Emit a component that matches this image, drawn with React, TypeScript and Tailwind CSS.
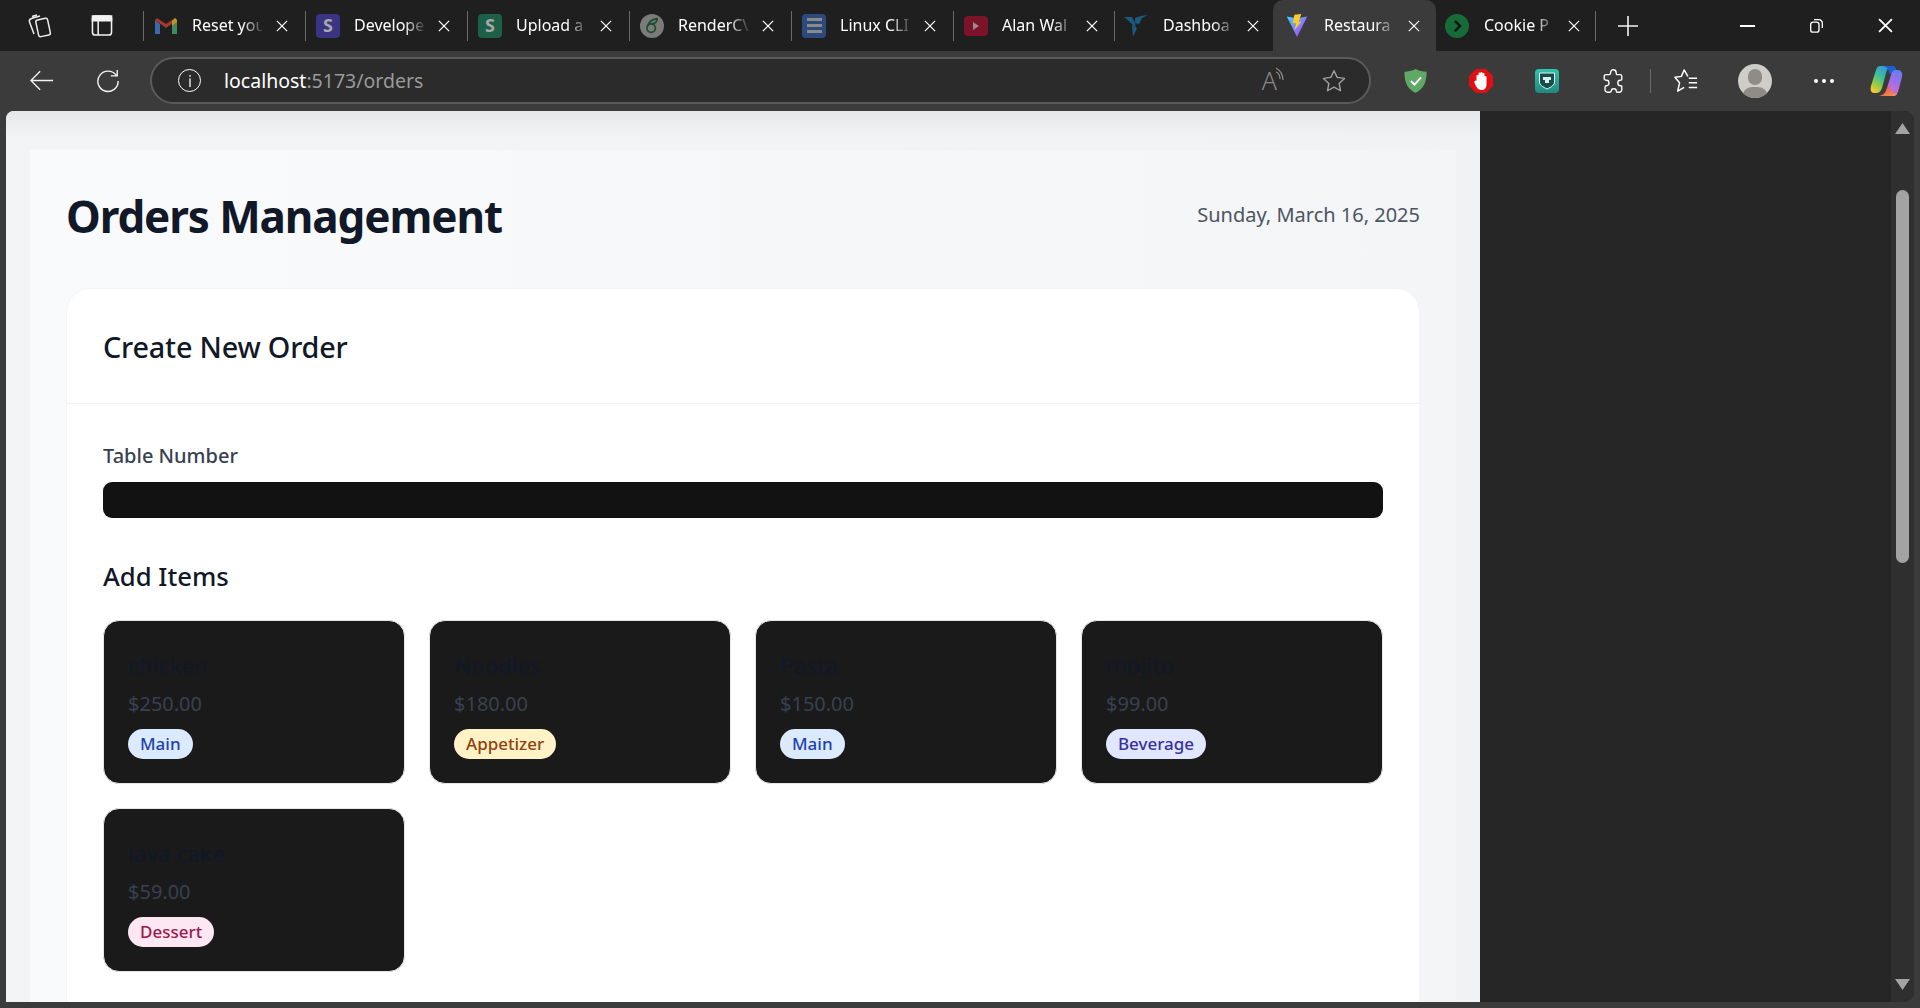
import React from "react";

const F = "font-['Noto_Sans','Open_Sans',sans-serif]";

function X({ s = 12, w = 1.5 }: { s?: number; w?: number }) {
  return (
    <svg width={s} height={s} viewBox="0 0 14 14" fill="none" stroke="#fff" strokeWidth={w}>
      <path d="M1 1 13 13M13 1 1 13" />
    </svg>
  );
}

const Gmail = () => (
  <svg width="22" height="16" viewBox="0 0 22 16">
    <path d="M0 2v14h5V6z" fill="#3a6aa8" />
    <path d="M22 2v14h-5V6z" fill="#3f8a5a" />
    <path d="M0 2 11 10 22 2l-2-2-9 6L2 0z" fill="#a8382f" />
    <path d="M17 3v5l5-4V2l-2-2z" fill="#b8962a" />
  </svg>
);
const Square = ({ bg, l }: { bg: string; l: string }) => (
  <div className={`w-6 h-6 rounded-[4px] flex items-center justify-center text-[18px] font-bold text-[#a8a8a8] ${bg}`}>{l}</div>
);
const Render = () => (
  <div className="w-6 h-6 rounded-full bg-[#7b7b7b] flex items-center justify-center">
    <svg width="14" height="17" viewBox="0 0 16 20" fill="none" stroke="#1d4d2d" strokeWidth="2">
      <circle cx="7" cy="13" r="5" />
      <path d="M3 11C4 5 8 3 14 2c0 4-3 6-7 6" />
    </svg>
  </div>
);
const Doc = () => (
  <div className="w-6 h-6 rounded-[4px] bg-[#2c4a7c] flex flex-col items-center justify-center gap-[3px]">
    <div className="w-[15px] h-[3px] bg-[#8a8a8a]" />
    <div className="w-[15px] h-[3px] bg-[#8a8a8a]" />
    <div className="w-[15px] h-[3px] bg-[#8a8a8a]" />
  </div>
);
const Yt = () => (
  <div className="w-6 h-5 rounded-[4px] bg-[#7c1328] flex items-center justify-center">
    <svg width="8" height="8" viewBox="0 0 8 8"><path d="M1 0 7 4 1 8z" fill="#9a8a8a" /></svg>
  </div>
);
const Bird = () => (
  <svg width="24" height="24" viewBox="0 0 24 24" fill="#1d5a80">
    <path d="M0 3 8 3 11 9 12 15 7 9z" />
    <path d="M11 4 17 2 24 1 18 4 15 10 11 9z" />
    <path d="M8 11 13 14 9 23z" />
  </svg>
);
const Vite = () => (
  <svg width="24" height="23" viewBox="0 0 24 27">
    <defs>
      <linearGradient id="vt" x1="0" y1="0" x2="1" y2="1">
        <stop offset="0" stopColor="#41d1ff" />
        <stop offset="1" stopColor="#bd34fe" />
      </linearGradient>
    </defs>
    <path d="M0 3 12 5 24 3 12 27z" fill="url(#vt)" />
    <path d="M9 1 17 0 14 9 17 9 9 19 11 11 7 11z" fill="#ffcc26" />
  </svg>
);
const Cookie = () => (
  <div className="w-6 h-6 rounded-full bg-[#176b38] flex items-center justify-center">
    <svg width="9" height="12" viewBox="0 0 10 14" fill="none" stroke="#0b1a10" strokeWidth="3"><path d="M2 1 8 7 2 13" /></svg>
  </div>
);

function Tab({ icon, title, box, gap }: { icon: React.ReactNode; title: string; box: string; gap: string }) {
  return (
    <div className={`relative flex items-center h-[51px] shrink-0 ${box}`}>
      <div className="w-6 flex items-center justify-center shrink-0">{icon}</div>
      <div className={`w-[70px] pb-[2px] overflow-hidden whitespace-nowrap text-[16px] text-white [mask-image:linear-gradient(to_right,#000_72%,rgba(0,0,0,0.12))] ${gap}`}>{title}</div>
      <div className="ml-[14px] shrink-0"><X /></div>
    </div>
  );
}
const Sep = () => <div className="w-px h-[30px] bg-[#6a6a6a] shrink-0 -mr-px" />;

const NORMAL = "w-[162px] pl-[11px]";

function TabBar() {
  return (
    <div className={`flex items-center h-[51px] bg-[#1f1f1f] ${F}`}>
      <div className="w-[78px] flex justify-center shrink-0">
        <svg width="25" height="24" viewBox="0 0 25 24" fill="none" stroke="#eee" strokeWidth="1.5">
          <rect x="10" y="5" width="12" height="17" rx="2" transform="rotate(-12 16 13)" />
          <path d="M7 20 2.500 8c-.5-1.500.5-3 2-3.500L13 2M5 2.500 10 1" />
        </svg>
      </div>
      <div className="w-[65px] flex justify-start pl-[13px] shrink-0">
        <svg width="22" height="21" viewBox="0 0 22 22" fill="none" stroke="#f2f2f2" strokeWidth="1.6">
          <rect x="1" y="1" width="20" height="20" rx="3" />
          <path d="M1 1h20v5H1z" fill="#f2f2f2" />
          <path d="M7 6v15" />
        </svg>
      </div>
      <Sep />
      <Tab box={NORMAL} gap="ml-[14px]" icon={<Gmail />} title="Reset you" />
      <Sep />
      <Tab box={NORMAL} gap="ml-[14px]" icon={<Square bg="bg-[#3a3482]" l="S" />} title="Develope" />
      <Sep />
      <Tab box={NORMAL} gap="ml-[14px]" icon={<Square bg="bg-[#1d5f47]" l="S" />} title="Upload a" />
      <Sep />
      <Tab box={NORMAL} gap="ml-[14px]" icon={<Render />} title="RenderCV" />
      <Sep />
      <Tab box={NORMAL} gap="ml-[14px]" icon={<Doc />} title="Linux CLI" />
      <Sep />
      <Tab box="w-[161px] pl-[11px]" gap="ml-[14px]" icon={<Yt />} title="Alan Wal" />
      <Sep />
      <Tab box="w-[159px] pl-[10px]" gap="ml-[15px]" icon={<Bird />} title="Dashboa" />
      <Tab box="w-[163px] pl-[12px] bg-[#3b3b3b] rounded-t-[10px]" gap="ml-[15px]" icon={<Vite />} title="Restaura" />
      <Tab box="w-[159px] pl-[9px]" gap="ml-[15px]" icon={<Cookie />} title="Cookie P" />
      <Sep />
      <div className="w-[66px] flex justify-center shrink-0">
        <svg width="20" height="20" viewBox="0 0 20 20" stroke="#f2f2f2" strokeWidth="1.6"><path d="M10 0v20M0 10h20" /></svg>
      </div>
      <div className="flex-1" />
      <div className="w-[69px] flex justify-center shrink-0">
        <svg width="15" height="2" viewBox="0 0 15 2"><path d="M0 1h15" stroke="#fff" strokeWidth="2" /></svg>
      </div>
      <div className="w-[69px] flex justify-center shrink-0">
        <svg width="15" height="15" viewBox="0 0 16 18" fill="none" stroke="#fff" strokeWidth="1.6">
          <rect x="1" y="5" width="10" height="12" rx="3" />
          <path d="M5 2h6c2 0 4 2 4 4v6" />
        </svg>
      </div>
      <div className="w-[69px] flex justify-center shrink-0">
        <X s={15} w={1.7} />
      </div>
    </div>
  );
}

function Toolbar() {
  return (
    <div className={`flex items-center h-[60px] bg-[#3b3b3b] pb-[1px] ${F}`}>
      <div className="w-[84px] flex justify-center shrink-0">
        <svg width="24" height="21" viewBox="0 0 26 22" fill="none" stroke="#f2f2f2" strokeWidth="1.5">
          <path d="M25 11H2M11 1 1 11l10 10" />
        </svg>
      </div>
      <div className="w-[48px] flex justify-center shrink-0">
        <svg width="24" height="24" viewBox="0 0 26 26" fill="none" stroke="#f2f2f2" strokeWidth="1.5">
          <path d="M22 7A11 11 0 1 0 24 13M23 1v6.500h-7" />
        </svg>
      </div>
      <div className="w-[18px] shrink-0" />
      <div className="flex items-center w-[1221px] h-[47px] shrink-0 rounded-full bg-[#2b2b2b] border-2 border-[#5a5a5a]">
        <div className="ml-[26px] w-[23px] h-[23px] rounded-full border-[1.5px] border-white flex items-center justify-center shrink-0">
          <svg width="4" height="12" viewBox="0 0 4 14" fill="#fff"><rect x="1.250" y="0" width="1.500" height="2" /><rect x="1.250" y="4" width="1.500" height="10" /></svg>
        </div>
        <div className="ml-[23px] pt-[1px] text-[19.500px] whitespace-nowrap text-[#9a9a9a]"><span className="text-white">localhost</span>:5173/orders</div>
        <div className="flex-1" />
        <span className="text-[25px] font-light text-[#8a8a8a] leading-none">A</span>
        <svg className="mb-[14px] -ml-[2px]" width="10" height="14" viewBox="0 0 10 14" fill="none" stroke="#8a8a8a" strokeWidth="1.3"><path d="M1 1c5 3 7 7 7 12M1 5c3 1 4 4 4 7" /></svg>
        <div className="w-[36px]" />
        <svg width="26" height="26" viewBox="0 0 24 24" fill="none" stroke="#a0a0a0" strokeWidth="1.3" strokeLinejoin="round">
          <path d="m12 2.500 2.950 6.200 6.800.9-5 4.700 1.250 6.700-6-3.300-6 3.300 1.250-6.700-5-4.700 6.800-.9z" />
        </svg>
        <div className="w-[22px]" />
      </div>
      <div className="w-[30px] shrink-0" />
      <div className="w-[28px] flex justify-center shrink-0">
        <svg width="23" height="24" viewBox="0 0 24 26">
          <path d="M12 0C8 2 4 3 0 3c0 12 3 18 12 23 9-5 12-11 12-23-4 0-8-1-12-3z" fill="#5fa866" />
          <path d="m7 13 4 4 7-8" fill="none" stroke="#fff" strokeWidth="2" />
        </svg>
      </div>
      <div className="w-[38px] shrink-0" />
      <div className="w-[28px] flex justify-center shrink-0">
        <svg width="24" height="24" viewBox="0 0 24 24">
          <path d="M7 0h10l7 7v10l-7 7H7l-7-7V7z" fill="#e00f13" />
          <path d="M7.500 12V7a1 1 0 0 1 2 0V4.500a1 1 0 0 1 2 0V4a1 1 0 0 1 2 0v1a1 1 0 0 1 2 0v3a1 1 0 0 1 2 0v7c0 4-2 6-5 6-2 0-4-1-5-3l-2-4c-.5-2 1-3 2-2z" fill="#fff" />
        </svg>
      </div>
      <div className="w-[40px] shrink-0" />
      <div className="w-[24px] h-[24px] shrink-0 rounded-[4px] bg-gradient-to-b from-[#2fc4ae] to-[#1f8a80] flex items-center justify-center">
        <svg width="16" height="18" viewBox="0 0 16 18">
          <path d="M.5 1h15v9c0 3-3 5-7.500 7C4 15 .5 13 .5 10z" fill="#184e4a" stroke="#e6f6f3" />
          <rect x="4" y="5" width="8" height="3" fill="#d8f0ec" />
          <rect x="6" y="8" width="4" height="3" fill="#d8f0ec" />
        </svg>
      </div>
      <div className="w-[42px] shrink-0" />
      <div className="w-[24px] flex justify-center shrink-0">
        <svg width="22" height="24" viewBox="0 0 24 30" fill="none" stroke="#fff" strokeWidth="1.700" strokeLinejoin="round">
          <path d="M9 5c0-6 7-5 7 0 0 1 0 2 1 2h4c2 0 2 1 2 2v4c0 1-1 1-2 1-4 0-4 7 0 7 1 0 2 0 2 1v4c0 2-2 3-3 3h-3c-1 0-1-1-1-2 0-3-6-3-6 0 0 1-1 2-2 2H5c-2 0-3-2-3-3v-3c0-1 1-2 2-2 4 0 4-7 0-7-2 0-3-1-3-2V9c0-1 1-2 3-2h3c1 0 2-1 2-2z" />
        </svg>
      </div>
      <div className="w-[25px] shrink-0" />
      <div className="w-[1px] h-[24px] bg-[#6a6a6a] shrink-0" />
      <div className="w-[23px] shrink-0" />
      <div className="w-[24px] flex justify-center shrink-0">
        <svg width="24" height="24" viewBox="0 0 26 26" fill="none" stroke="#fff" strokeWidth="1.6" strokeLinejoin="round">
          <path d="M15 8 11 1 8 8 1 9l5 6-2 9 7-4M16 10h9M16 15h9M16 20h9" />
        </svg>
      </div>
      <div className="w-[40px] shrink-0" />
      <div className="relative w-[34px] h-[34px] shrink-0 rounded-full bg-[#cfcdc8] overflow-hidden">
        <div className="absolute left-[10px] top-[5px] w-[14px] h-[16px] rounded-full bg-[#8f8c87]" />
        <div className="absolute left-[4px] top-[23px] w-[26px] h-[20px] rounded-full bg-[#8f8c87]" />
      </div>
      <div className="w-[42px] shrink-0" />
      <div className="flex gap-[4px] shrink-0">
        <div className="w-[4px] h-[4px] rounded-full bg-white" />
        <div className="w-[4px] h-[4px] rounded-full bg-white" />
        <div className="w-[4px] h-[4px] rounded-full bg-white" />
      </div>
      <div className="w-[36px] shrink-0" />
      <svg className="shrink-0" width="33" height="30" viewBox="0 0 33 30">
        <defs>
          <linearGradient id="cp1" x1="0.8" y1="0" x2="0.2" y2="1"><stop offset="0" stopColor="#2f8fe8" /><stop offset=".45" stopColor="#3fc09a" /><stop offset=".75" stopColor="#9ccb3c" /><stop offset="1" stopColor="#f6c93a" /></linearGradient>
          <linearGradient id="cp2" x1="0.7" y1="0" x2="0.3" y2="1"><stop offset="0" stopColor="#6a7cf0" /><stop offset=".5" stopColor="#a86ee8" /><stop offset="1" stopColor="#e86cb0" /></linearGradient>
          <linearGradient id="cp3" x1="0" y1="0" x2="1" y2="1"><stop offset="0" stopColor="#e8483a" /><stop offset="1" stopColor="#f79a5a" /></linearGradient>
        </defs>
        <path d="M10 0h12c-3 1-5 3-6 7l-4 15c-1 3-3 5-6 5H4c-3 0-4-3-3-7L6 4c1-3 2-4 4-4z" fill="url(#cp1)" />
        <path d="M14 0h9c2 0 3 2 3 4v4h-6c-1-4-3-7-6-8z" fill="#1f5fd0" />
        <path d="M12 30h11c3 0 4-2 5-4l4-15c1-4-1-7-4-7h-2c-3 0-4 2-5 5l-4 13c-1 4-2 7-5 8z" fill="url(#cp2)" />
        <path d="M9 30h14c2 0 3-1 4-2-4 0-7-3-8-8l-2 2c-1 4-3 7-8 8z" fill="url(#cp3)" />
      </svg>
    </div>
  );
}

function Pill({ c, t }: { c: string; t: string }) {
  return <span className={`inline-block rounded-full px-3 h-[30px] leading-[30px] text-[17px] font-medium ${c}`}>{t}</span>;
}

function Item({ name, price, cat, c }: { name: string; price: string; cat: string; c: string }) {
  return (
    <div className="h-[164px] rounded-[16px] bg-[#1a1a1a] border border-[#e5e7eb] px-[24px] pt-[29px]">
      <div className="text-[22px] leading-[30px] font-medium text-[#111827]">{name}</div>
      <div className="mt-[9px] text-[20px] leading-[30px] text-[#374151]">{price}</div>
      <div className="mt-[10px] flex"><Pill c={c} t={cat} /></div>
    </div>
  );
}

function Page() {
  return (
    <div className={`w-[1474px] h-full overflow-hidden bg-gradient-to-r from-[#f3f4f6] to-[#f1f2f4] rounded-tl-[8px] pl-[24px] pr-[24px] pt-[39px] relative ${F}`}>
      <div className="absolute left-0 right-0 top-0 h-[26px] bg-gradient-to-b from-[#e6e7e9] to-transparent" />
      <div className="relative w-[1426px] h-full bg-gradient-to-r from-[#f9fafb] to-[#f4f5f7] px-[37px] pt-[37px]">
        <div className="flex items-center justify-between h-[57px]">
          <h1 className="-ml-[1px] text-[44px] font-bold text-[#111827] tracking-[-1.100px] leading-[60px]">Orders Management</h1>
          <div className="-mr-[1px] pb-[2px] text-[20px] text-[#4b5563]">Sunday, March 16, 2025</div>
        </div>
        <div className="mt-[44px] -ml-[1px] w-[1354px] rounded-t-[24px] bg-white border border-[#f3f4f6] h-[800px]">
          <div className="h-[115px] flex items-center pl-[36px] pt-[2px] border-b border-[#f0f1f3]">
            <h2 className="text-[28.800px] font-medium text-[#111827] tracking-[-0.2px]">Create New Order</h2>
          </div>
          <div className="pl-[36px] pr-[36px] pt-[37px]">
            <label className="block text-[20px] leading-[30px] font-medium text-[#374151]">Table Number</label>
            <div className="mt-[11px] h-[36px] rounded-[9px] bg-[#121212] w-[1280px]" />
            <h3 className="mt-[41px] text-[25.700px] leading-[36px] font-medium text-[#111827]">Add Items</h3>
            <div className="mt-[25px] grid grid-cols-4 gap-[24px] w-[1280px]">
              <Item name="chicken" price="$250.00" cat="Main" c="bg-[#dbeafe] text-[#1e40af]" />
              <Item name="Noodles" price="$180.00" cat="Appetizer" c="bg-[#fef3c7] text-[#92400e]" />
              <Item name="Pasta" price="$150.00" cat="Main" c="bg-[#dbeafe] text-[#1e40af]" />
              <Item name="mojito" price="$99.00" cat="Beverage" c="bg-[#e0e7ff] text-[#3730a3]" />
              <Item name="lava cake" price="$59.00" cat="Dessert" c="bg-[#fce7f3] text-[#9d174d]" />
            </div>
          </div>
        </div>
      </div>
    </div>
  );
}

function Side() {
  return (
    <div className="flex-1 flex bg-[#262626] rounded-r-[10px] overflow-hidden justify-end">
      <div className="w-[23px] bg-[#2f2f2f] flex flex-col items-center relative">
        <svg className="mt-[12px]" width="15" height="11" viewBox="0 0 15 11"><path d="M7.500 0 15 11H0z" fill="#a3a3a3" /></svg>
        <div className="mt-[56px] w-[13px] h-[373px] rounded-full bg-[#a3a3a3]" />
        <div className="flex-1" />
        <svg className="mb-[12px]" width="15" height="11" viewBox="0 0 15 11"><path d="M0 0h15L7.500 11z" fill="#a3a3a3" /></svg>
      </div>
    </div>
  );
}

export default function App() {
  return (
    <div className="w-[1920px] h-[1008px] overflow-hidden flex flex-col bg-[#3b3b3b]">
      <TabBar />
      <Toolbar />
      <div className="flex h-[891px] ml-[6px] mr-[6px]">
        <Page />
        <Side />
      </div>
    </div>
  );
}
